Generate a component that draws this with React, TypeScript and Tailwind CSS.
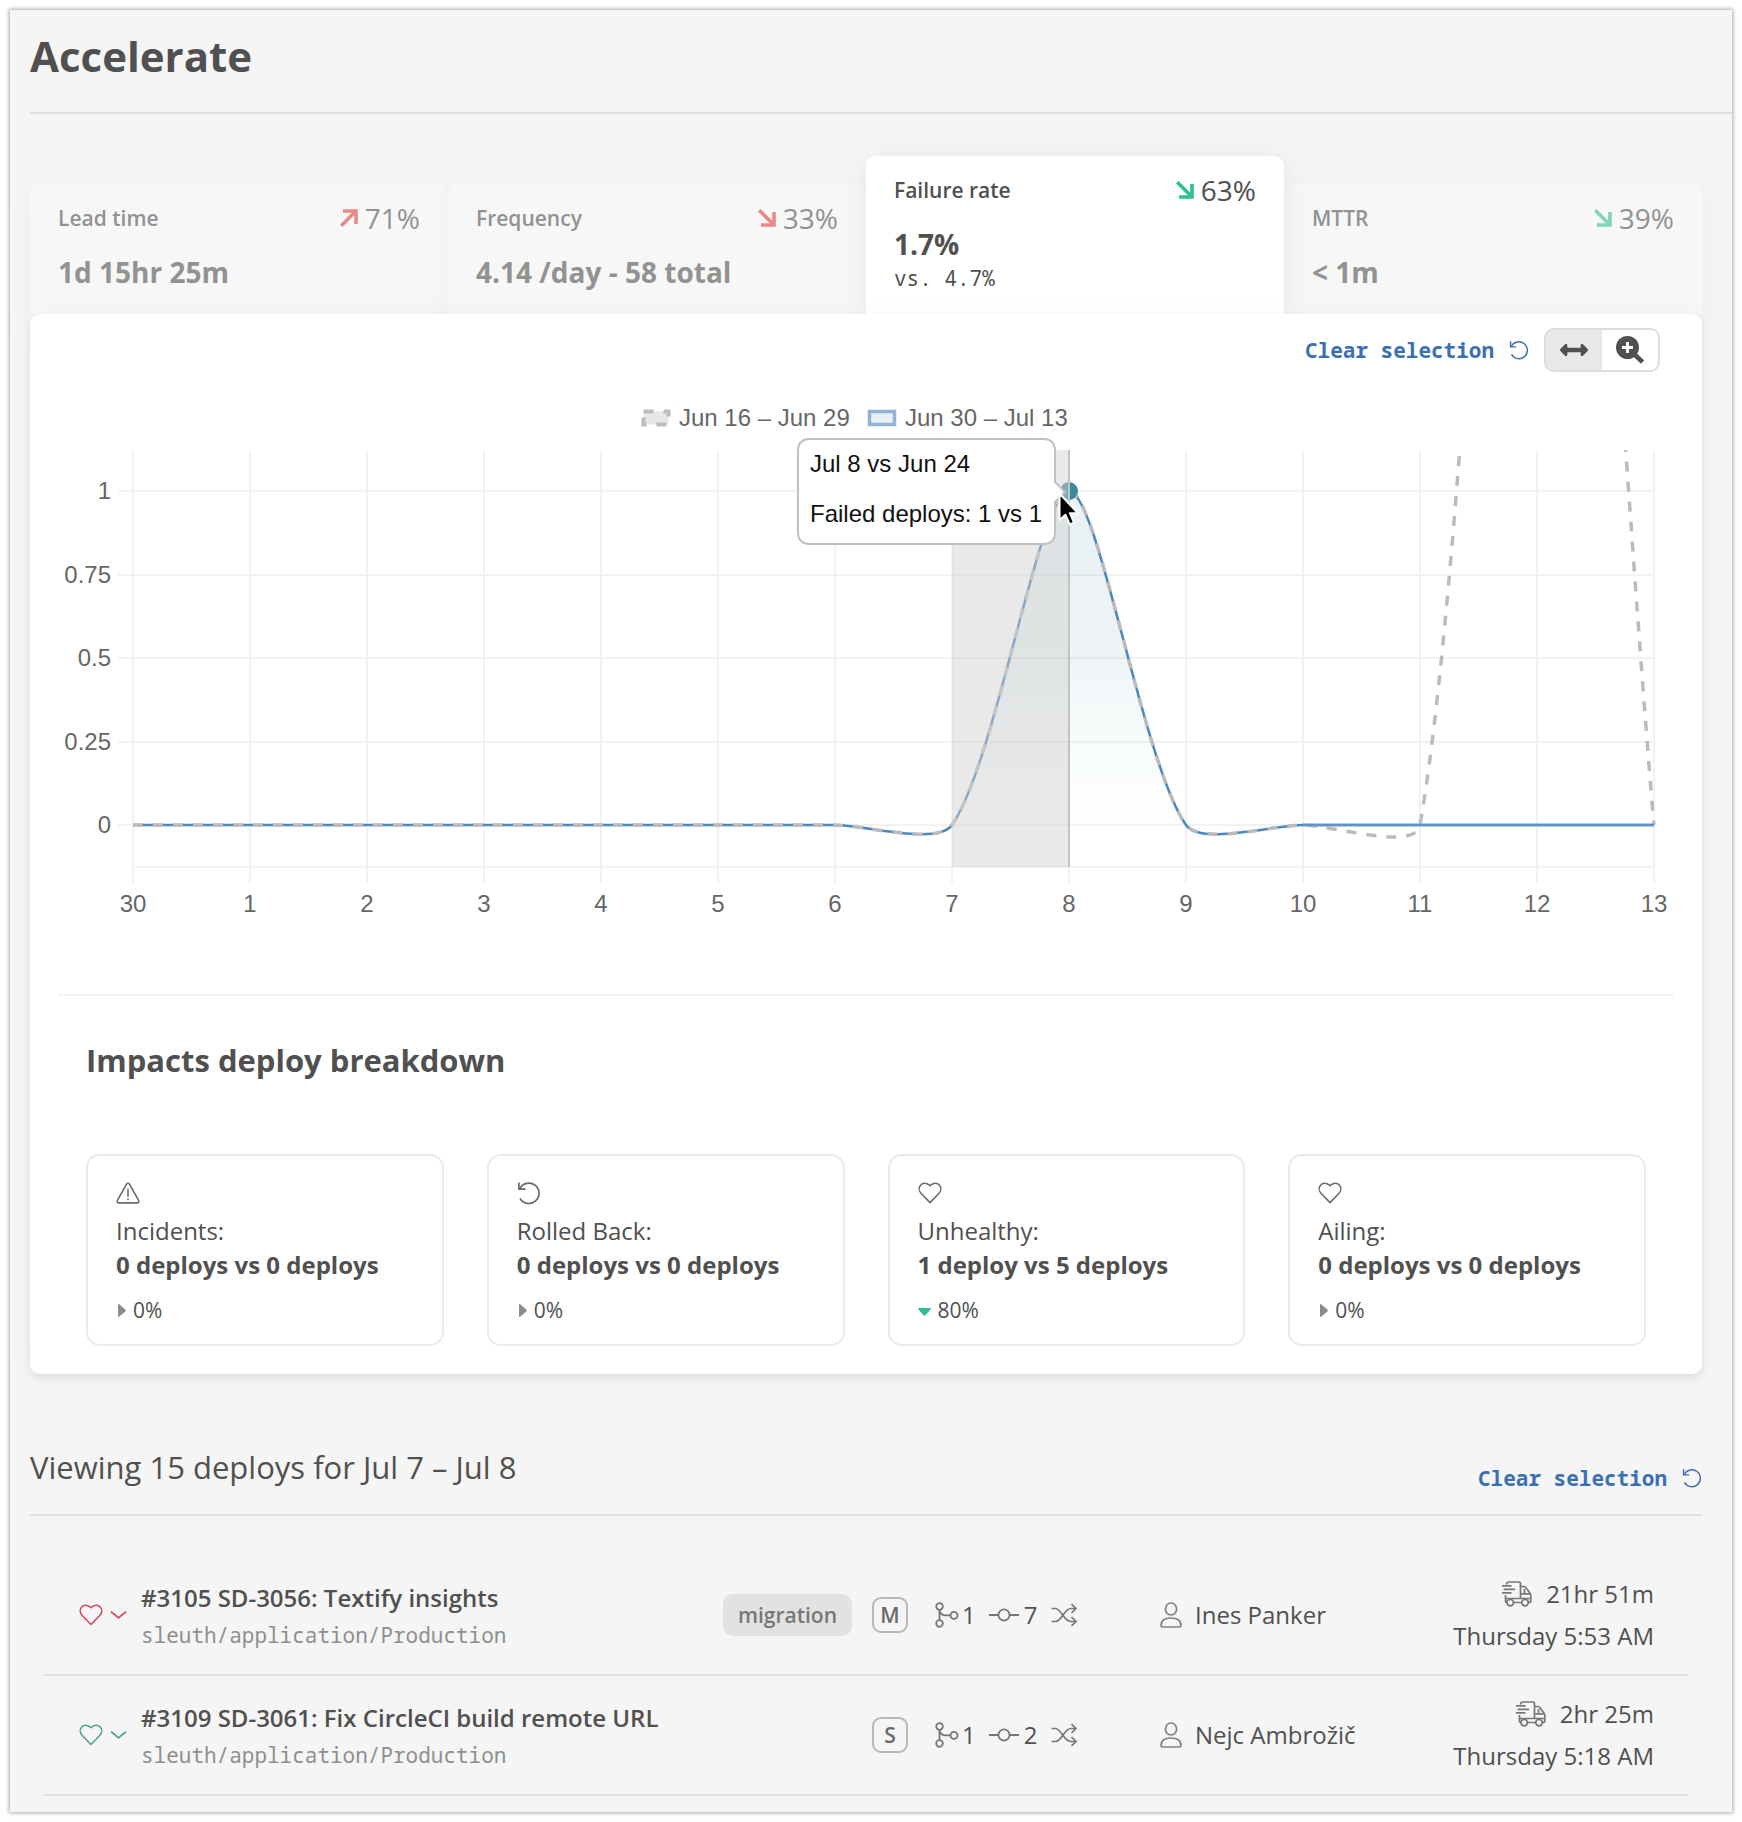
import React from "react";
import { FaArrowsAltH } from "react-icons/fa";

const MONO = "font-['Noto_Sans_Mono','DejaVu_Sans_Mono',monospace]";

/* ---------- icons ---------- */

type IconProps = { className?: string };

function TrendArrow({ up, className }: { up?: boolean; className?: string }) {
  return (
    <svg viewBox="0 0 18 18" className={className} fill="none" stroke="currentColor" strokeWidth="3.6" aria-hidden="true">
      {up ? <path d="M1.200 16.800 15.500 2.500M3 2H16V15" /> : <path d="M1.200 1.200 15.500 15.500M3 16H16V3" />}
    </svg>
  );
}

function MagnifierIcon({ className }: IconProps) {
  return (
    <svg viewBox="0 0 28 28" className={className} fill="none" aria-hidden="true">
      <circle cx="11.500" cy="11.500" r="11.500" fill="currentColor" />
      <path d="M18 18 26.500 26" stroke="currentColor" strokeWidth="4.600" />
      <path d="M11.500 6V17M6 11.500H17" stroke="#fff" strokeWidth="2.800" />
    </svg>
  );
}

function HeartIcon({ className }: IconProps) {
  return (
    <svg viewBox="0 0 26 24" className={className} fill="none" stroke="currentColor" strokeWidth="1.700" strokeLinejoin="round" aria-hidden="true">
      <path d="M13 22.400 3.200 12.200C.8 9.600.7 5.800 2.700 3.500 4.300 1.600 7.200 1 9.700 2 11 2.500 12.200 3.200 13 4 13.800 3.200 15 2.500 16.300 2 18.800 1 21.700 1.600 23.300 3.500 25.300 5.800 25.200 9.600 22.800 12.200Z" />
    </svg>
  );
}

function UndoIcon({ className }: IconProps) {
  return (
    <svg viewBox="0 0 24 24" className={className} fill="none" stroke="currentColor" strokeWidth="1.700" aria-hidden="true">
      <path d="M1.900 1.500V8.200H8.600" />
      <path d="M2.700 7.800A10.200 10.200 0 1 1 3 17.300" />
    </svg>
  );
}

function WarningIcon({ className }: IconProps) {
  return (
    <svg viewBox="0 0 26 24" className={className} fill="none" stroke="currentColor" strokeWidth="1.700" strokeLinejoin="round" strokeLinecap="round" aria-hidden="true">
      <path d="M11.300 2.600Q13 .2 14.700 2.600L24.500 20Q25.400 22.600 22.800 22.700H3.200Q.6 22.600 1.500 20Z" />
      <path d="M13 8v7.500M13 18.600v.6" />
    </svg>
  );
}

function ChevronIcon({ className }: IconProps) {
  return (
    <svg viewBox="0 0 18 10" className={className} fill="none" stroke="currentColor" strokeWidth="1.800" aria-hidden="true">
      <path d="M1 1.500Q4 3.500 9 8 14 3.500 17 1.500" />
    </svg>
  );
}

function BranchIcon({ className }: IconProps) {
  return (
    <svg viewBox="0 0 24 26" className={className} fill="none" stroke="currentColor" strokeWidth="1.800" aria-hidden="true">
      <circle cx="4.500" cy="4.500" r="3.300" />
      <circle cx="4.500" cy="21.500" r="3.300" />
      <circle cx="19" cy="13.300" r="3.500" />
      <path d="M4.500 7.800V18.200M4.500 7.800C5 11.500 7 13.300 11 13.300H15.500" />
    </svg>
  );
}

function CommitIcon({ className }: IconProps) {
  return (
    <svg viewBox="0 0 32 16" className={className} fill="none" stroke="currentColor" strokeWidth="1.800" aria-hidden="true">
      <circle cx="16" cy="8" r="5.600" />
      <path d="M1 8H10.400M21.600 8H31" />
    </svg>
  );
}

function ShuffleIcon({ className }: IconProps) {
  return (
    <svg viewBox="0 0 26 24" className={className} fill="none" stroke="currentColor" strokeWidth="1.700" aria-hidden="true">
      <path d="M.5 5.500H4C8 5.500 9.500 9 12 12.500S16.500 18.500 20 18.500H25" />
      <path d="M.5 18.500H4C8 18.500 9.500 15.500 12 12S16.500 5.500 20 5.500H25" />
      <path d="M20.500 1.200 25 5.500 20.500 9.800M20.500 14.200 25 18.500 20.500 22.800" />
    </svg>
  );
}

function PersonIcon({ className }: IconProps) {
  return (
    <svg viewBox="0 0 22 26" className={className} fill="none" stroke="currentColor" strokeWidth="1.700" strokeLinejoin="round" aria-hidden="true">
      <ellipse cx="11" cy="7" rx="5.600" ry="6" />
      <path d="M1 23.500C1 18.500 4.500 16 11 16S21 18.500 21 23.500Q21 25 19.500 25H2.500Q1 25 1 23.500Z" />
    </svg>
  );
}

function TruckIcon({ className }: IconProps) {
  return (
    <svg viewBox="0 0 30 26" className={className} fill="none" stroke="currentColor" strokeWidth="1.700" aria-hidden="true">
      <path d="M4.500 3.500Q4.800 1 7 1H17Q18.500 1 18.500 2.500V17.500M18.500 5.500H21.500Q23 5.500 24.200 7L28.200 12.500Q28.800 13.300 28.800 14.500V19.500Q28.800 21.500 26.800 21.500M18.500 12.800H28.500M22.500 8V12.800" />
      <path d="M0 4.800H9.500M1.500 8.300H13M0 11.800H9.500M3.500 14V19.500Q3.500 21.500 5 21.500M3.500 17.500H28.500M11.500 21.500H19.500" />
      <circle cx="8.200" cy="21.600" r="3.300" />
      <circle cx="23" cy="21.600" r="3.300" />
    </svg>
  );
}

/* ---------- metric tabs ---------- */

type Tab = { name: string; value: string; change: string; up?: boolean; good?: boolean; active?: boolean; compare?: string };

const tabs: Tab[] = [
  { name: "Lead time", value: "1d 15hr 25m", change: "71%", up: true },
  { name: "Frequency", value: "4.14 /day - 58 total", change: "33%" },
  { name: "Failure rate", value: "1.7%", change: "63%", good: true, active: true, compare: "vs. 4.7%" },
  { name: "MTTR", value: "< 1m", change: "39%", good: true },
];

function MetricTab({ tab }: { tab: Tab }) {
  const arrow = tab.active ? "text-[#2fbf92]" : tab.good ? "text-[#80d4b8]" : "text-[#e88a87]";
  return (
    <button
      type="button"
      role="tab"
      aria-selected={!!tab.active}
      className={
        tab.active
          ? "relative flex h-[158px] min-w-0 flex-1 flex-col rounded-t-[10px] bg-white px-7 pt-4 text-left text-[#505050] shadow-[0_4px_28px_rgba(0,0,0,0.07)]"
          : "flex h-[130px] min-w-0 flex-1 flex-col rounded-t-[10px] bg-[#f7f7f7] px-7 pt-4 text-left text-[#929292] shadow-[0_8px_28px_rgba(0,0,0,0.04)]"
      }
    >
      <span className="flex w-full items-center justify-between">
        <span className="text-[21px] font-semibold leading-7">{tab.name}</span>
        <span className="flex items-center gap-[7px] text-[28px] leading-9">
          <TrendArrow up={tab.up} className={"size-[18px] " + arrow} />
          {tab.change}
        </span>
      </span>
      <span className="mt-[18px] text-[28px] font-bold leading-9">{tab.value}</span>
      {tab.compare && <span className={"mt-0.5 text-[21px] leading-7 " + MONO}>{tab.compare}</span>}
    </button>
  );
}

/* ---------- chart ---------- */

const LEFT = 103;
const RIGHT = 1624;
const TOP = 60;
const BASE = 435;
const FLOOR = 477;
const UNIT = 334;
const days = ["30", "1", "2", "3", "4", "5", "6", "7", "8", "9", "10", "11", "12", "13"];
const current = [0, 0, 0, 0, 0, 0, 0, 0, 1, 0, 0, 0, 0, 0];
const previous = [0, 0, 0, 0, 0, 0, 0, 0, 1, 0, 0, 0, 4, 0];
const xAt = (i: number) => LEFT + ((RIGHT - LEFT) / 13) * i;
const yAt = (v: number) => BASE - v * UNIT;

function spline(values: number[], tension = 0.25) {
  const pts = values.map((v, i) => ({ x: xAt(i), y: yAt(v) }));
  const handles = pts.map((p, i) => {
    const a = pts[Math.max(i - 1, 0)];
    const b = pts[Math.min(i + 1, pts.length - 1)];
    const before = Math.hypot(p.x - a.x, p.y - a.y);
    const after = Math.hypot(b.x - p.x, b.y - p.y);
    const fa = (tension * before) / (before + after);
    const fb = (tension * after) / (before + after);
    return {
      inX: p.x - fa * (b.x - a.x),
      inY: p.y - fa * (b.y - a.y),
      outX: p.x + fb * (b.x - a.x),
      outY: p.y + fb * (b.y - a.y),
    };
  });
  return pts.reduce(
    (d, p, i) =>
      i === 0
        ? `M${p.x} ${p.y}`
        : `${d}C${handles[i - 1].outX} ${handles[i - 1].outY} ${handles[i].inX} ${handles[i].inY} ${p.x} ${p.y}`,
    "",
  );
}

function FailureChart() {
  const line = spline(current);
  const peak = Math.floor(xAt(8));
  const start = Math.round(xAt(7));
  return (
    <svg
      viewBox="0 0 1672 540"
      role="img"
      aria-label="Failed deploys per day"
      className="mt-[18px] block h-auto w-full text-[24px] font-['Liberation_Sans',Arial,sans-serif]"
    >
      <defs>
        <linearGradient id="area" gradientUnits="userSpaceOnUse" x1="0" y1="100" x2="0" y2="436">
          <stop offset="0" stopColor="#3c829b" stopOpacity="0.11" />
          <stop offset="0.45" stopColor="#3c829b" stopOpacity="0.09" />
          <stop offset="0.8" stopColor="#3c9bb0" stopOpacity="0.03" />
          <stop offset="1" stopColor="#3c9bb0" stopOpacity="0" />
        </linearGradient>
        <clipPath id="plot">
          <rect x={LEFT} y={TOP} width={RIGHT - LEFT + 2} height={FLOOR - TOP} />
        </clipPath>
      </defs>

      <rect x="613.500" y="21.500" width="25" height="13" fill="#e6e6e6" stroke="#bcbcbc" strokeWidth="4" strokeDasharray="10 10" />
      <text x="649" y="36" fill="#666">Jun 16 – Jun 29</text>
      <rect x="839.500" y="21.500" width="25" height="13" fill="#e9f0f3" stroke="#92b3d6" strokeWidth="3.500" />
      <text x="875" y="36" fill="#666">Jun 30 – Jul 13</text>

      <g stroke="#f2f2f2" strokeWidth="2">
        {days.map((d, i) => (
          <line key={d} x1={Math.round(xAt(i))} x2={Math.round(xAt(i))} y1={TOP} y2="493" />
        ))}
        {[1, 0.75, 0.5, 0.25, 0].map((v) => (
          <line key={v} x1="88" x2={RIGHT} y1={Math.round(yAt(v))} y2={Math.round(yAt(v))} />
        ))}
        <line x1={LEFT} x2={RIGHT} y1={FLOOR} y2={FLOOR} />
      </g>
      <g fill="#666" textAnchor="end">
        {[1, 0.75, 0.5, 0.25, 0].map((v) => (
          <text key={v} x="81" y={Math.round(yAt(v)) + 8}>{v}</text>
        ))}
      </g>
      <g fill="#666" textAnchor="middle">
        {days.map((d, i) => (
          <text key={d} x={Math.floor(xAt(i))} y="522">{d}</text>
        ))}
      </g>

      <path d={line + "Z"} fill="url(#area)" clipPath="url(#plot)" />
      <path d={line} fill="none" stroke="#4a86c0" strokeWidth="2.500" />
      <path d={spline(previous)} fill="none" stroke="#bbb" strokeWidth="3.500" strokeDasharray="10 10" clipPath="url(#plot)" />
      <path d={`M${xAt(10)} ${BASE}H${RIGHT}`} stroke="#5f92c6" strokeWidth="2.500" />
      <circle cx={peak} cy="101" r="9" fill="#3a8a9f" />
      <rect x={start} y={TOP} width={peak - start} height={FLOOR - TOP} fill="#d0d0d0" fillOpacity="0.47" />
      <line x1={peak} x2={peak} y1={TOP} y2={FLOOR} stroke="#c2c2c2" strokeWidth="2" />

      <path
        d="M780 49H1013Q1025 49 1025 61V92L1035 102 1025 112V142Q1025 154 1013 154H780Q768 154 768 142V61Q768 49 780 49Z"
        fill="#fff"
        stroke="#c0c0c0"
        strokeWidth="2"
      />
      <text x="780" y="82" fill="#111">Jul 8 vs Jun 24</text>
      <text x="780" y="132" fill="#111">Failed deploys: 1 vs 1</text>

      <path d="M1029.500 103.500V130L1035.500 124.800 1039.700 134.500 1044 132.600 1039.900 123.200H1048Z" fill="#000" stroke="#fff" strokeWidth="2" strokeLinejoin="round" />
    </svg>
  );
}

/* ---------- breakdown ---------- */

const breakdown = [
  { label: "Incidents:", value: "0 deploys vs 0 deploys", pct: "0%", Icon: WarningIcon },
  { label: "Rolled Back:", value: "0 deploys vs 0 deploys", pct: "0%", Icon: UndoIcon },
  { label: "Unhealthy:", value: "1 deploy vs 5 deploys", pct: "80%", down: true, Icon: HeartIcon },
  { label: "Ailing:", value: "0 deploys vs 0 deploys", pct: "0%", Icon: HeartIcon },
];

function BreakdownCard({ label, value, pct, down, Icon }: (typeof breakdown)[number]) {
  return (
    <li className="min-w-0 flex-1 rounded-[14px] border-2 border-[#ebebeb] px-7 pb-5 pt-[25px]">
      <Icon className="h-6 w-6 text-[#6a6a6a]" />
      <p className="mt-[9px] text-[24px] leading-[34px]">{label}</p>
      <p className="text-[24px] font-bold leading-[34px]">{value}</p>
      <p className="mt-3.5 flex items-center gap-[7px] text-[21px] leading-7">
        {down ? (
          <svg viewBox="0 0 13 8" className="mt-1 h-2 w-[13px] fill-[#2fbf92]" aria-hidden="true">
            <path d="M1 0H12Q13.500 0 12.500 1.500L7.500 7.300Q6.500 8.300 5.500 7.300L.5 1.500Q-.5 0 1 0Z" />
          </svg>
        ) : (
          <svg viewBox="0 0 8 13" className="ml-0.5 h-[13px] w-2 fill-[#8c8c8c]" aria-hidden="true">
            <path d="M0 1Q0-.5 1.500.5L7.300 5.500Q8.300 6.500 7.300 7.500L1.500 12.500Q0 13.500 0 12Z" />
          </svg>
        )}
        {pct}
      </p>
    </li>
  );
}

/* ---------- deploys ---------- */

const deploys = [
  { title: "#3105 SD-3056: Textify insights", tone: "text-[#d9485f]", tag: "migration", size: "M", branches: 1, commits: 7, author: "Ines Panker", lead: "21hr 51m", at: "Thursday 5:53 AM" },
  { title: "#3109 SD-3061: Fix CircleCI build remote URL", tone: "text-[#4fa58c]", tag: "", size: "S", branches: 1, commits: 2, author: "Nejc Ambrožič", lead: "2hr 25m", at: "Thursday 5:18 AM" },
];

function DeployRow({ deploy }: { deploy: (typeof deploys)[number] }) {
  return (
    <li className="flex h-[120px] items-center border-b-2 border-[#e0e0e0] pl-[35px] pr-[34px] text-[24px] leading-[34px]">
      <button type="button" aria-label="Deploy health" className={"flex w-[62px] shrink-0 items-center gap-[7px] " + deploy.tone}>
        <HeartIcon className="h-[22px] w-6" />
        <ChevronIcon className="h-[10px] w-[17px]" />
      </button>
      <div className="min-w-0 flex-1">
        <a href="#deploy" className="block font-semibold">{deploy.title}</a>
        <p className={"mt-1.5 text-[21px] leading-7 text-[#8f8f8f] " + MONO}>sleuth/application/Production</p>
      </div>
      {deploy.tag && (
        <span className="mr-5 flex h-[42px] items-center rounded-[10px] bg-[#e2e2e2] px-[15px] text-[21px] font-semibold leading-7 text-[#777]">
          {deploy.tag}
        </span>
      )}
      <span className="mr-[27px] flex size-9 shrink-0 items-center justify-center rounded-[9px] border-2 border-[#bcb6b6] text-[21px] font-semibold leading-7 text-[#6a6a6a]">
        {deploy.size}
      </span>
      <div className="flex w-[225px] shrink-0 items-center font-medium">
        <BranchIcon className="h-[26px] w-6 text-[#777]" />
        <span className="ml-[3px]">{deploy.branches}</span>
        <CommitIcon className="ml-3 h-4 w-8 text-[#777]" />
        <span className="ml-1">{deploy.commits}</span>
        <ShuffleIcon className="ml-3.5 h-6 w-[26px] text-[#777]" />
      </div>
      <div className="flex w-[234px] shrink-0 items-center gap-[13px]">
        <PersonIcon className="h-[26px] w-[22px] text-[#808080]" />
        {deploy.author}
      </div>
      <div className="flex w-[260px] shrink-0 flex-col items-end gap-2">
        <span className="flex items-center gap-3.5">
          <TruckIcon className="h-[26px] w-[30px] text-[#777]" />
          {deploy.lead}
        </span>
        <span>{deploy.at}</span>
      </div>
    </li>
  );
}

function ClearSelection() {
  return (
    <button type="button" className={"flex items-center gap-[15px] text-[21px] font-bold leading-7 text-[#3a70b2] " + MONO}>
      Clear selection
      <UndoIcon className="size-5" />
    </button>
  );
}

export default function App() {
  return (
    <div className="bg-white p-[10px] font-['Open_Sans',sans-serif] text-[#505050]">
      <main className="bg-[#f5f5f5] pb-4 pl-5 shadow-[0_0_4px_1px_rgba(0,0,0,0.35)]">
        <header className="border-b-2 border-[#e0e0e0] pb-7 pt-[18px]">
          <h1 className="text-[42px] font-bold leading-[56px]">Accelerate</h1>
        </header>

        <div className="mr-[30px] mt-[42px]">
          <div role="tablist" className="flex items-end">
            {tabs.map((t) => (
              <MetricTab key={t.name} tab={t} />
            ))}
          </div>

          <section className="relative rounded-[10px] bg-white pb-7 shadow-[0_4px_8px_rgba(0,0,0,0.08),0_2px_30px_rgba(0,0,0,0.03)]">
            <div className="flex items-center justify-end gap-[15px] pr-[42px] pt-3.5">
              <ClearSelection />
              <div className="flex h-11 w-[116px] overflow-hidden rounded-[10px] border-2 border-[#dcdcdc]">
                <button type="button" aria-label="Select range" aria-pressed="true" className="flex flex-1 items-center justify-center bg-[#e8e8e8]">
                  <FaArrowsAltH className="size-7" />
                </button>
                <button type="button" aria-label="Zoom in" className="flex flex-1 items-center justify-center bg-white">
                  <MagnifierIcon className="size-7" />
                </button>
              </div>
            </div>

            <FailureChart />

            <hr className="mx-7 mt-16 border-t-2 border-[#f2f2f2]" />
            <div className="px-14">
              <h2 className="mt-[43px] text-[31px] font-bold leading-[42px]">Impacts deploy breakdown</h2>
              <ul className="mt-[73px] flex gap-[43px]">
                {breakdown.map((b) => (
                  <BreakdownCard key={b.label} {...b} />
                ))}
              </ul>
            </div>
          </section>

          <div className="mt-[72px] flex items-end justify-between border-b-2 border-[#e0e0e0] pb-[22px]">
            <h2 className="pb-1 text-[31px] leading-[42px]">Viewing 15 deploys for Jul 7 – Jul 8</h2>
            <ClearSelection />
          </div>

          <ul className="mx-3.5 mt-10">
            {deploys.map((d) => (
              <DeployRow key={d.title} deploy={d} />
            ))}
          </ul>
        </div>
      </main>
    </div>
  );
}
